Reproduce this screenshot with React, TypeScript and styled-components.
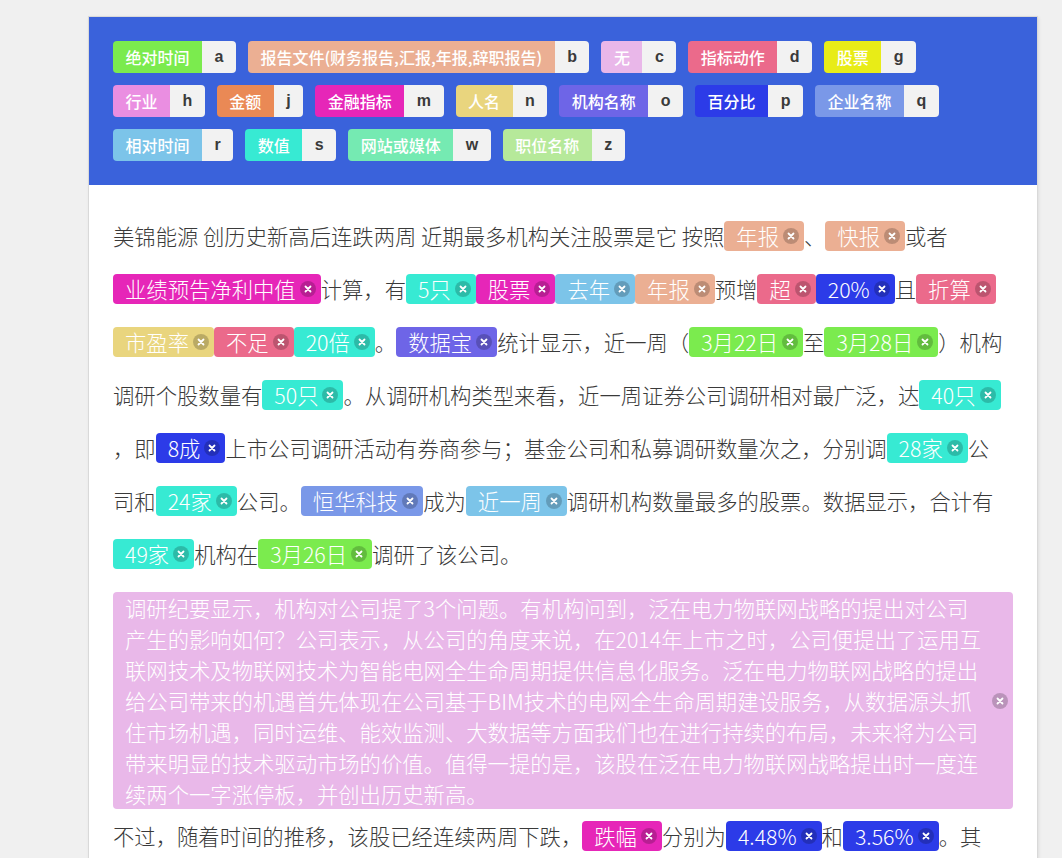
import React from "react";
import styled, { createGlobalStyle } from "styled-components";

const GlobalStyle = createGlobalStyle`
  html, body {
    margin: 0;
    padding: 0;
    background: #f0f0f0;
  }
  body {
    font-family: "Noto Sans CJK SC", "Noto Sans", sans-serif;
    color: #333;
  }
`;

const C = {
  abs: "#7beb4e",
  report: "#ebaf93",
  none: "#e9b7e9",
  action: "#eb6a8b",
  stock: "#e8ec17",
  industry: "#ea8ee1",
  money: "#ea8955",
  fin: "#e626b8",
  person: "#e9d57e",
  org: "#6e65e7",
  pct: "#2c3be8",
  company: "#7a98e8",
  rel: "#7cc4e9",
  num: "#37ead3",
  media: "#75eab2",
  title: "#b6e99a",
};

const LABELS: [string, string, string][] = [
  ["绝对时间", "a", C.abs],
  ["报告文件(财务报告,汇报,年报,辞职报告)", "b", C.report],
  ["无", "c", C.none],
  ["指标动作", "d", C.action],
  ["股票", "g", C.stock],
  ["行业", "h", C.industry],
  ["金额", "j", C.money],
  ["金融指标", "m", C.fin],
  ["人名", "n", C.person],
  ["机构名称", "o", C.org],
  ["百分比", "p", C.pct],
  ["企业名称", "q", C.company],
  ["相对时间", "r", C.rel],
  ["数值", "s", C.num],
  ["网站或媒体", "w", C.media],
  ["职位名称", "z", C.title],
];

type Seg = string | { t: string; c: string };
const T = (t: string, c: string): Seg => ({ t, c });

const PARA1: Seg[] = [
  "美锦能源 创历史新高后连跌两周 近期最多机构关注股票是它 按照",
  T("年报", C.report),
  "、",
  T("快报", C.report),
  "或者",
  T("业绩预告净利中值", C.fin),
  "计算，有",
  T("5只", C.num),
  T("股票", C.fin),
  T("去年", C.rel),
  T("年报", C.report),
  "预增",
  T("超", C.action),
  T("20%", C.pct),
  "且",
  T("折算", C.action),
  T("市盈率", C.person),
  T("不足", C.action),
  T("20倍", C.num),
  "。",
  T("数据宝", C.org),
  "统计显示，近一周（",
  T("3月22日", C.abs),
  "至",
  T("3月28日", C.abs),
  "）机构调研个股数量有",
  T("50只", C.num),
  "。从调研机构类型来看，近一周证券公司调研相对最广泛，达",
  T("40只", C.num),
  "，即",
  T("8成", C.pct),
  "上市公司调研活动有券商参与；基金公司和私募调研数量次之，分别调",
  T("28家", C.num),
  "公司和",
  T("24家", C.num),
  "公司。",
  T("恒华科技", C.company),
  "成为",
  T("近一周", C.rel),
  "调研机构数量最多的股票。数据显示，合计有",
  T("49家", C.num),
  "机构在",
  T("3月26日", C.abs),
  "调研了该公司。",
];

const QUOTE =
  "调研纪要显示，机构对公司提了3个问题。有机构问到，泛在电力物联网战略的提出对公司产生的影响如何？公司表示，从公司的角度来说，在2014年上市之时，公司便提出了运用互联网技术及物联网技术为智能电网全生命周期提供信息化服务。泛在电力物联网战略的提出给公司带来的机遇首先体现在公司基于BIM技术的电网全生命周期建设服务，从数据源头抓住市场机遇，同时运维、能效监测、大数据等方面我们也在进行持续的布局，未来将为公司带来明显的技术驱动市场的价值。值得一提的是，该股在泛在电力物联网战略提出时一度连续两个一字涨停板，并创出历史新高。";

const PARA2: Seg[] = [
  "不过，随着时间的推移，该股已经连续两周下跌，",
  T("跌幅", C.fin),
  "分别为",
  T("4.48%", C.pct),
  "和",
  T("3.56%", C.pct),
  "。其",
];

const Card = styled.div`
  box-sizing: border-box;
  width: 950px;
  margin: 16px 0 0 88px;
  background: #fff;
  border: 1px solid #d9d9d9;
  box-shadow: 1px 1px 3px rgba(0, 0, 0, 0.08);
`;

const Header = styled.div`
  background: #3a62db;
  padding: 24px;
  display: flex;
  flex-wrap: wrap;
  gap: 12px;
`;

const LabelTag = styled.div`
  display: flex;
  height: 32px;
  border-radius: 4px;
  overflow: hidden;
  font-size: 16px;
`;

const LabelName = styled.span<{ $bg: string }>`
  display: flex;
  align-items: center;
  padding: 0 12.5px;
  background: ${(p) => p.$bg};
  color: #fff;
  font-weight: 500;
  white-space: nowrap;
`;

const LabelKey = styled.span`
  display: flex;
  align-items: center;
  padding: 0 12.5px;
  background: #f2f2f2;
  color: #3a3a3a;
  font-family: "Liberation Sans", Arial, sans-serif;
  font-weight: 700;
`;

const Content = styled.div`
  padding: 24px;
  font-size: 21.33px;
  font-weight: 300;
  line-height: 53px;
  color: #3a3a3a;
`;

const Para = styled.p`
  margin: 0;
  padding-right: 4px;
`;

const Entity = styled.span<{ $bg: string }>`
  display: inline-flex;
  align-items: center;
  gap: 4px;
  height: 30px;
  line-height: 30px;
  padding: 0 5px 0 12px;
  border-radius: 4px;
  background: ${(p) => p.$bg};
  color: #fff;
  white-space: nowrap;
`;

const Remove = styled.span`
  display: inline-flex;
  align-items: center;
  justify-content: center;
  flex: 0 0 16px;
  width: 16px;
  height: 16px;
  border-radius: 50%;
  background: rgba(0, 0, 0, 0.2);
`;

const Quote = styled.div`
  display: flex;
  align-items: center;
  gap: 7px;
  margin-top: 12px;
  padding: 0 5px 0 12px;
  background: #e9b8e9;
  border-radius: 4px;
`;

const QuoteText = styled.div`
  flex: 1;
  color: #fff;
  line-height: 31px;
`;

const Cross = () => (
  <svg width="8" height="8" viewBox="0 0 8 8">
    <path
      d="M1.5 1.5 L6.5 6.5 M6.5 1.5 L1.5 6.5"
      stroke="#fff"
      strokeWidth="1.8"
      strokeLinecap="round"
    />
  </svg>
);

const RemoveButton = () => (
  <Remove>
    <Cross />
  </Remove>
);

const renderSegs = (segs: Seg[]) =>
  segs.map((s, i) =>
    typeof s === "string" ? (
      <React.Fragment key={i}>{s}</React.Fragment>
    ) : (
      <Entity key={i} $bg={s.c}>
        {s.t}
        <RemoveButton />
      </Entity>
    )
  );

export default function App() {
  return (
    <>
      <GlobalStyle />
      <Card>
        <Header>
          {LABELS.map(([name, key, color]) => (
            <LabelTag key={key}>
              <LabelName $bg={color}>{name}</LabelName>
              <LabelKey>{key}</LabelKey>
            </LabelTag>
          ))}
        </Header>
        <Content>
          <Para>{renderSegs(PARA1)}</Para>
          <Quote>
            <QuoteText>{QUOTE}</QuoteText>
            <RemoveButton />
          </Quote>
          <Para>{renderSegs(PARA2)}</Para>
        </Content>
      </Card>
    </>
  );
}
